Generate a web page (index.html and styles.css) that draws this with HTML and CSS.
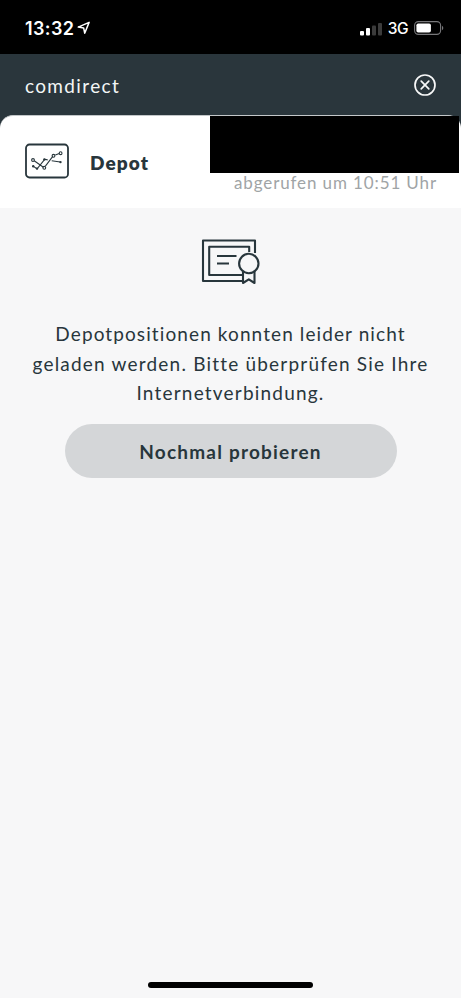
FILE: index.html
```html
<!DOCTYPE html>
<html lang="de">
<head>
<meta charset="utf-8">
<meta name="viewport" content="width=device-width, initial-scale=1">
<title>comdirect</title>
<link rel="stylesheet" href="styles.css">
</head>
<body>
<div class="status">
  <span class="time">13:32</span>
  <svg class="location" width="14" height="14" viewBox="0 0 14 14"><path d="M1.2 6.1 12.1 1.4 7.7 12.2 6.7 7.1Z"/></svg>
  <svg class="signal" width="22" height="14" viewBox="0 0 22 14"><rect x="0" y="9" width="4" height="4.5" rx="1"/><rect x="6" y="6" width="4" height="7.5" rx="1"/><rect class="off" x="12" y="3.5" width="4" height="10" rx="1"/><rect class="off" x="18" y="1" width="4" height="12.5" rx="1"/></svg>
  <span class="network">3G</span>
  <svg class="battery" width="30" height="14" viewBox="0 0 30 14"><rect class="shell" x=".6" y=".6" width="26" height="12.8" rx="3.8"/><rect x="2.4" y="2.4" width="14.5" height="9.2" rx="1.8"/><path class="tip" d="M28 4.8q1.3.8 1.3 2.2T28 9.2Z"/></svg>
</div>
<header class="bank">
  <h1>comdirect</h1>
  <svg width="24" height="24" viewBox="0 0 24 24"><circle cx="12" cy="12" r="10"/><path d="m8.2 8.2 7.6 7.6m0-7.6-7.6 7.6"/></svg>
</header>
<main>
  <section class="account">
    <svg class="chart" width="44" height="36" viewBox="0 0 44 36">
      <rect x="1" y="1.5" width="42" height="33" rx="3.5"/>
      <g class="lines"><path d="m9.2 17.8 9.2 6.4m2-1.1 7.4-9.7m2.5-1.3 4-1.6M8.4 23.4l3.7 2.4 7.6-9.5 3 .6m4 .8 8.5 1.3"/><circle cx="8" cy="17" r="1.4"/><circle cx="19.3" cy="24.8" r="1.4"/><circle cx="28.5" cy="12.8" r="1.4"/><circle cx="35.6" cy="10.2" r="1.4"/></g>
      <g class="dots"><circle cx="8.2" cy="23.2" r="1.2"/><circle cx="12" cy="25.6" r="1.2"/><circle cx="19.4" cy="16.4" r="1.2"/><circle cx="35.5" cy="19.1" r="1.2"/></g>
    </svg>
    <h2>Depot</h2>
    <div class="balance">
      <div class="redacted"></div>
      <span class="fetched">abgerufen um 10:51 Uhr</span>
    </div>
  </section>
  <section class="empty">
    <svg class="certificate" width="60" height="48" viewBox="0 0 60 48">
      <path d="M41.5 43H2V2.5h52V15M41.5 37H8.2V8.7h40V14M16 18h19.5M16 25.5h12"/>
      <path class="ribbon" d="M42 33v12l5.8-3.7 5.7 3.7V33"/>
      <circle cx="47.8" cy="25.5" r="9.7"/>
    </svg>
    <p><span class="l1">Depotpositionen konnten leider nicht</span><br><span class="l2">geladen werden. Bitte überprüfen Sie Ihre</span><br><span class="l3">Internetverbindung.</span></p>
    <button type="button">Nochmal probieren</button>
  </section>
</main>
<div class="home"></div>
</body>
</html>
```
FILE: styles.css
```css
* { box-sizing: border-box; }
body {
  margin: 0;
  height: 998px;
  display: flex;
  flex-direction: column;
  overflow: hidden;
  background: #f7f7f8;
  color: #28363c;
  font-family: Lato, sans-serif;
}
svg { display: block; flex: none; }
h1, h2, p { margin: 0; }
.status {
  height: 54px;
  flex: none;
  display: flex;
  align-items: center;
  padding: 3px 17px 0 25px;
  background: #000;
  color: #fff;
  font-family: Inter, sans-serif;
}
.time { font-size: 18px; font-weight: 600; letter-spacing: .4px; }
.location { margin: -2px 0 0 3px; fill: none; stroke: #fff; stroke-width: 1.5; stroke-linejoin: round; }
.signal { margin-left: auto; fill: #fff; }
.signal .off { fill: #3b3b3b; }
.network { margin: 0 6px 0 6px; font-size: 15.5px; font-weight: 500; letter-spacing: -.5px; }
.battery { fill: #fff; margin-top: -1px; }
.battery .shell { fill: none; stroke: #77777a; stroke-width: 1.1; }
.battery .tip { fill: #77777a; }
.bank {
  height: 74px;
  flex: none;
  display: flex;
  align-items: flex-start;
  justify-content: space-between;
  padding: 19px 24px 0 25px;
  background: #2a363c;
  color: #f4f6f6;
}
.bank h1 { font-size: 19px; font-weight: 400; line-height: 26px; letter-spacing: 1.35px; }
.bank svg { fill: none; stroke: #f7f8f8; stroke-width: 1.7; stroke-linecap: round; }
main { position: relative; margin-top: -13px; flex: 1; }
.account {
  height: 93px;
  display: flex;
  background: #fff;
  border-top: 1px solid #c3c7c9;
  border-radius: 13px 13px 0 0;
  padding-left: 25px;
}
.chart { margin-top: 27px; fill: none; stroke: #28363c; stroke-width: 1.8; }
.chart .lines { stroke-width: 1.1; }
.chart .dots { fill: #28363c; stroke: none; }
.account h2 { margin: 34px 0 0 21px; font-size: 19px; line-height: 26px; font-weight: 800; letter-spacing: 1.1px; }
.balance { margin-left: auto; width: 251px; }
.redacted { width: 248.5px; height: 57px; background: #000; }
.fetched {
  display: block;
  padding-right: 24px;
  text-align: right;
  white-space: nowrap;
  color: #a0a4a6;
  font-size: 17px;
  font-weight: 400;
  line-height: 20px;
  letter-spacing: .88px;
}
.empty { display: flex; flex-direction: column; align-items: center; padding-top: 30px; }
.certificate { overflow: visible; fill: none; stroke: #28363c; stroke-width: 2.1; stroke-linejoin: round; }
.certificate circle { fill: #f7f7f8; }
.certificate .ribbon { fill: #f7f7f8; }
.empty p { margin-top: 33px; font-size: 19px; line-height: 29.5px; text-align: center; white-space: nowrap; }
.l1 { letter-spacing: 1.1px; }
.l2, .l3 { letter-spacing: 1.2px; }
.empty button {
  width: 332px;
  height: 54px;
  margin-top: 16px;
  padding: 2px 0 0;
  border: 0;
  border-radius: 27px;
  background: #d4d6d8;
  color: #28363c;
  font: 700 19px Lato, sans-serif;
  letter-spacing: 1.2px;
}
.home { width: 165px; height: 6px; margin: 0 auto 10px; border-radius: 3px; background: #000; flex: none; }
```
